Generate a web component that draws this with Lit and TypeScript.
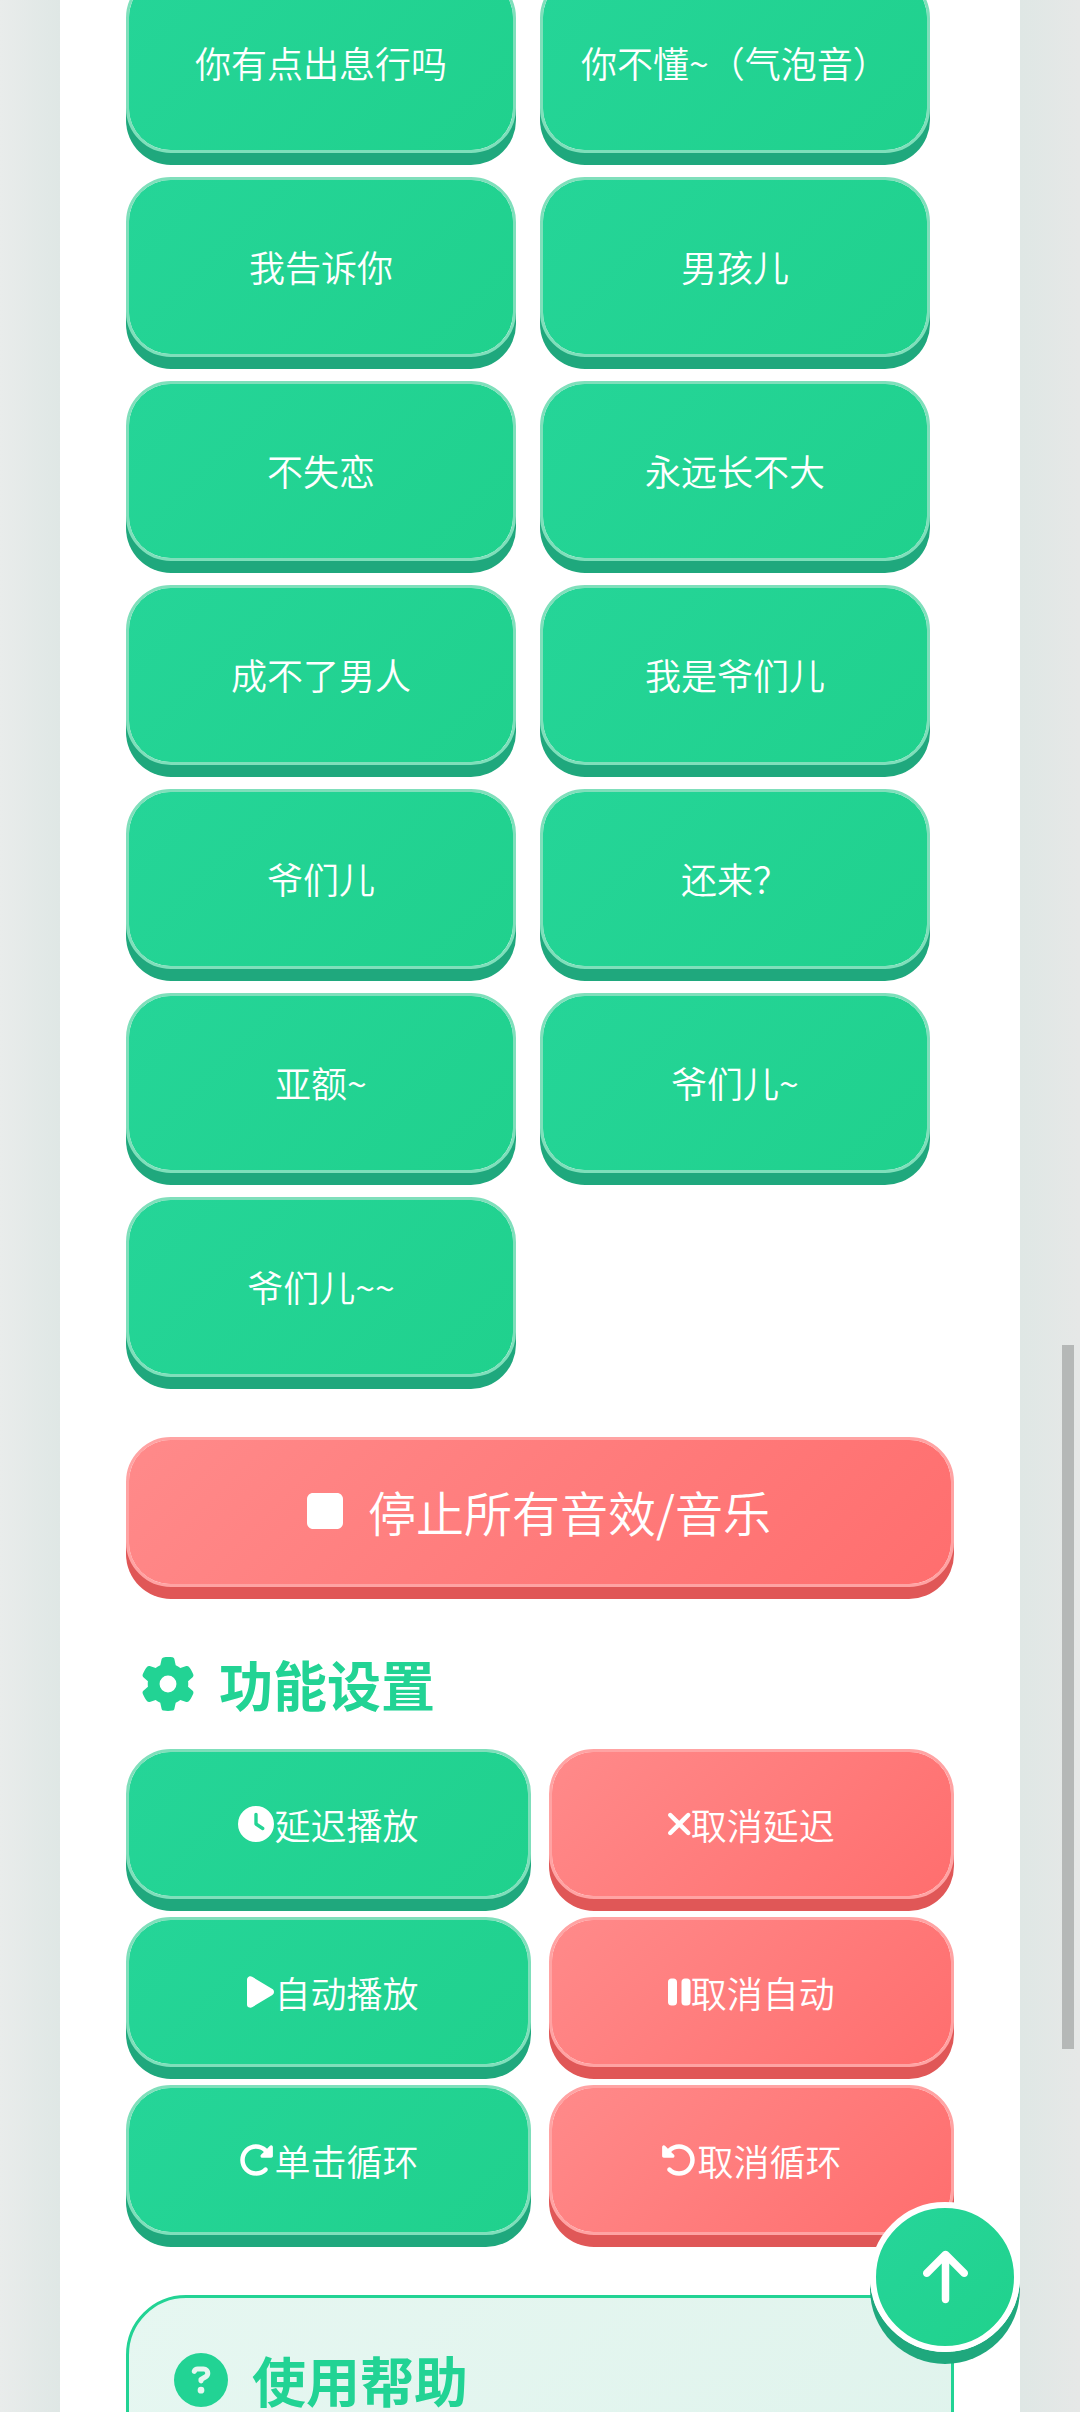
import { LitElement, html, css } from "lit";
import { customElement } from "lit/decorators.js";

const icon = (vb: number, d: string, cls = "") => html`<svg class="ic ${cls}" viewBox="0 0 ${vb} 512" style="width:${vb / 512}em"><path fill="currentColor" d=${d}></path></svg>`;

const P = {
  clock: "M256 0a256 256 0 1 1 0 512A256 256 0 1 1 256 0zM232 120V256c0 8 4 15.5 10.7 20l96 64c11 7.4 25.9 4.4 33.3-6.7s4.4-25.9-6.7-33.3L280 243.2V120c0-13.3-10.7-24-24-24s-24 10.7-24 24z",
  play: "M73 39c-14.8-9.1-33.4-9.4-48.5-.9S0 62.6 0 80V432c0 17.4 9.4 33.4 24.5 41.9s33.7 8.1 48.5-.9L361 297c14.3-8.7 23-24.2 23-41s-8.7-32.2-23-41L73 39z",
  xmark: "M310.6 361.4c12.5 12.5 12.5 32.75 0 45.25C304.4 412.9 296.2 416 288 416s-16.38-3.125-22.62-9.375L160 301.3L54.63 406.6C48.38 412.9 40.19 416 32 416S15.63 412.9 9.375 406.6c-12.5-12.5-12.5-32.75 0-45.25l105.4-105.4L9.375 150.6c-12.5-12.5-12.5-32.75 0-45.25s32.75-12.5 45.25 0L160 210.8l105.4-105.4c12.5-12.5 32.75-12.5 45.25 0s12.5 32.75 0 45.25l-105.4 105.4L310.6 361.4z",
  pause: "M48 64C21.5 64 0 85.5 0 112V400c0 26.5 21.5 48 48 48H80c26.5 0 48-21.5 48-48V112c0-26.5-21.5-48-48-48H48zm192 0c-26.5 0-48 21.5-48 48V400c0 26.5 21.5 48 48 48h32c26.5 0 48-21.5 48-48V112c0-26.5-21.5-48-48-48H240z",
  redo: "M463.5 224H472c13.3 0 24-10.7 24-24V72c0-9.7-5.8-18.5-14.8-22.2s-19.3-1.7-26.2 5.2L413.4 96.6c-87.6-86.5-228.7-86.2-315.8 1c-87.5 87.5-87.5 229.3 0 316.8s229.3 87.5 316.8 0c12.5-12.5 12.5-32.8 0-45.3s-32.8-12.5-45.3 0c-62.5 62.5-163.8 62.5-226.3 0s-62.5-163.8 0-226.3c62.2-62.2 162.7-62.5 225.3-1L327 183c-6.9 6.9-8.9 17.2-5.2 26.2s12.5 14.8 22.2 14.8H463.5z",
  undo: "M48.5 224H40c-13.3 0-24-10.7-24-24V72c0-9.7 5.8-18.5 14.8-22.2s19.3-1.7 26.2 5.2L98.6 96.6c87.6-86.5 228.7-86.2 315.8 1c87.5 87.5 87.5 229.3 0 316.8s-229.3 87.5-316.8 0c-12.5-12.5-12.5-32.8 0-45.3s32.8-12.5 45.3 0c62.5 62.5 163.8 62.5 226.3 0s62.5-163.8 0-226.3c-62.2-62.2-162.7-62.5-225.3-1L185 183c6.9 6.9 8.9 17.2 5.2 26.2s-12.5 14.8-22.2 14.8H48.5z",
  gear: "M495.9 166.6c3.2 8.7 .5 18.4-6.4 24.6l-43.3 39.4c1.1 8.3 1.7 16.8 1.7 25.4s-.6 17.1-1.7 25.4l43.3 39.4c6.9 6.2 9.6 15.9 6.4 24.6c-4.4 11.9-9.7 23.3-15.8 34.3l-4.7 8.1c-6.6 11-14 21.4-22.1 31.2c-5.9 7.2-15.7 9.6-24.5 6.8l-55.7-17.7c-13.4 10.3-28.2 18.9-44 25.4l-12.5 57.1c-2 9.1-9 16.3-18.2 17.8c-13.8 2.3-28 3.5-42.5 3.5s-28.7-1.2-42.5-3.5c-9.2-1.5-16.2-8.7-18.2-17.8l-12.5-57.1c-15.8-6.5-30.6-15.1-44-25.4L83.1 425.9c-8.8 2.8-18.6 .3-24.5-6.8c-8.1-9.8-15.5-20.2-22.1-31.2l-4.7-8.1c-6.1-11-11.4-22.4-15.8-34.3c-3.2-8.7-.5-18.4 6.4-24.6l43.3-39.4C64.6 273.1 64 264.6 64 256s.6-17.1 1.7-25.4L22.4 191.2c-6.9-6.2-9.6-15.9-6.4-24.6c4.4-11.9 9.7-23.3 15.8-34.3l4.7-8.1c6.6-11 14-21.4 22.1-31.2c5.9-7.2 15.7-9.6 24.5-6.8l55.7 17.7c13.4-10.3 28.2-18.9 44-25.4l12.5-57.1c2-9.1 9-16.3 18.2-17.8C227.3 1.2 241.5 0 256 0s28.7 1.2 42.5 3.5c9.2 1.5 16.2 8.7 18.2 17.8l12.5 57.1c15.8 6.5 30.6 15.1 44 25.4l55.7-17.7c8.8-2.8 18.6-.3 24.5 6.8c8.1 9.8 15.5 20.2 22.1 31.2l4.7 8.1c6.1 11 11.4 22.4 15.8 34.3zM256 336a80 80 0 1 0 0-160 80 80 0 1 0 0 160z",
  help: "M256 512A256 256 0 1 0 256 0a256 256 0 1 0 0 512zM169.8 165.3c7.9-22.3 29.1-37.3 52.8-37.3h58.3c34.9 0 63.1 28.3 63.1 63.1c0 22.6-12.1 43.5-31.7 54.8L280 264.4c-.2 13-10.9 23.6-24 23.6c-13.3 0-24-10.7-24-24V250.5c0-8.6 4.6-16.5 12.1-20.8l44.3-25.4c4.7-2.7 7.6-7.7 7.6-13.1c0-8.4-6.8-15.1-15.1-15.1H222.6c-3.4 0-6.4 2.1-7.5 5.3l-.4 1.2c-4.4 12.5-18.2 19-30.6 14.6s-19-18.2-14.6-30.6l.4-1.2zM224 352a32 32 0 1 1 64 0 32 32 0 1 1 -64 0z",
  up: "M214.6 41.4c-12.5-12.5-32.8-12.5-45.3 0l-160 160c-12.5 12.5-12.5 32.8 0 45.3s32.8 12.5 45.3 0L160 141.2V448c0 17.7 14.3 32 32 32s32-14.3 32-32V141.2L329.4 246.6c12.5 12.5 32.8 12.5 45.3 0s12.5-32.8 0-45.3l-160-160z",
  stop: "M0 128C0 92.7 28.7 64 64 64H320c35.3 0 64 28.7 64 64V384c0 35.3-28.7 64-64 64H64c-35.3 0-64-28.7-64-64V128z",
};

const sounds = ["你有点出息行吗", "你不懂~（气泡音）", "我告诉你", "男孩儿", "不失恋", "永远长不大", "成不了男人", "我是爷们儿", "爷们儿", "还来？", "亚额~", "爷们儿~", "爷们儿~~"];

@customElement("app-root")
export class AppRoot extends LitElement {
  static styles = css`
    :host {
      display: block;
      position: relative;
      width: 1080px;
      height: 2412px;
      overflow: hidden;
      font-family: "Noto Sans CJK SC", "Noto Sans", sans-serif;
      background: linear-gradient(90deg, #e9eceb 0, #dfe7e5 60px, #dfe7e5 1020px, #e6e8e7 1080px);
    }
    .card {
      width: 960px;
      height: 2439px;
      margin: -27px 60px 0;
      background: #fff;
      padding: 0 66px;
      box-sizing: border-box;
      overflow: hidden;
    }
    .grid {
      display: grid;
      grid-template-columns: 390px 390px;
      gap: 24px;
    }
    .btn {
      display: flex;
      align-items: center;
      justify-content: center;
      box-sizing: border-box;
      color: #fff;
      font-size: 36px;
      font-weight: 350;
      border-radius: 45px;
      border: 3px solid rgba(255, 255, 255, 0.4);
      background-clip: padding-box;
      white-space: nowrap;
    }
    .green {
      background-color: #22d493;
      background-image: linear-gradient(135deg, #25d598, #20d18d);
      border-color: #7fdfbb;
      box-shadow: 0 12px 0 #1fa87d;
    }
    .red {
      background-color: #ff7b7b;
      background-image: linear-gradient(135deg, #ff8a8a, #ff6e6e);
      border-color: #ffa3a3;
      box-shadow: 0 12px 0 #e05757;
    }
    .sound { height: 180px; padding-bottom: 3px; }
    .stop {
      height: 150px;
      margin-top: 60px;
      font-size: 48px;
      gap: 25px;
      padding-right: 2px;
      padding-bottom: 2px;
    }
    .title {
      display: flex;
      align-items: center;
      gap: 24px;
      color: #22d394;
      font-size: 54px;
      font-weight: 700;
      line-height: 74px;
      margin: 60px 0 0;
      padding-left: 15px;
    }
    .actions {
      display: grid;
      grid-template-columns: 405px 405px;
      gap: 18px;
      margin-top: 28px;
    }
    .action { height: 150px; }
    .help {
      box-sizing: border-box;
      margin-top: 60px;
      padding: 50px 45px 0;
      height: 300px;
      border: 3px solid #22d394;
      border-radius: 60px;
      background: linear-gradient(135deg, #e6f7f1, #dff3ec);
    }
    .help .title { margin: 0; padding: 0; line-height: 64px; }
    .ic {
      height: 1em;
      display: block;
      flex: none;
    }
    .pad { margin-left: 9px; }
    .scrollbar {
      position: absolute;
      left: 1062px;
      top: 1345px;
      width: 12px;
      height: 704px;
      background: #b5b8b7;
    }
    .fab {
      position: absolute;
      right: 60px;
      bottom: 60px;
      width: 150px;
      height: 150px;
      box-sizing: border-box;
      border-radius: 50%;
      border: 6px solid #fff;
      background: linear-gradient(135deg, #26d59a, #20d28c);
      box-shadow: 0 12px 0 #1fa87d;
      color: #fff;
      font-size: 60px;
      display: flex;
      align-items: center;
      justify-content: center;
    }
  `;

  render() {
    const action = (cls: string, vb: number, d: string, label: string, ic = "") =>
      html`<div class="btn action ${cls}">${icon(vb, d, ic)}<span>${label}</span></div>`;
    return html`
      <div class="card">
        <div class="grid">
          ${sounds.map((s) => html`<div class="btn sound green"><span>${s}</span></div>`)}
        </div>
        <div class="btn stop red">${icon(384, P.stop)}<span>停止所有音效/音乐</span></div>
        <div class="title">${icon(512, P.gear)}<span>功能设置</span></div>
        <div class="actions">
          ${action("green", 512, P.clock, "延迟播放")}
          ${action("red", 320, P.xmark, "取消延迟")}
          ${action("green", 384, P.play, "自动播放", "pad")}
          ${action("red", 320, P.pause, "取消自动")}
          ${action("green", 512, P.redo, "单击循环")}
          ${action("red", 512, P.undo, "取消循环")}
        </div>
        <div class="help">
          <div class="title">${icon(512, P.help)}<span>使用帮助</span></div>
        </div>
      </div>
      <div class="scrollbar"></div>
      <div class="fab">${icon(384, P.up)}</div>
    `;
  }
}
